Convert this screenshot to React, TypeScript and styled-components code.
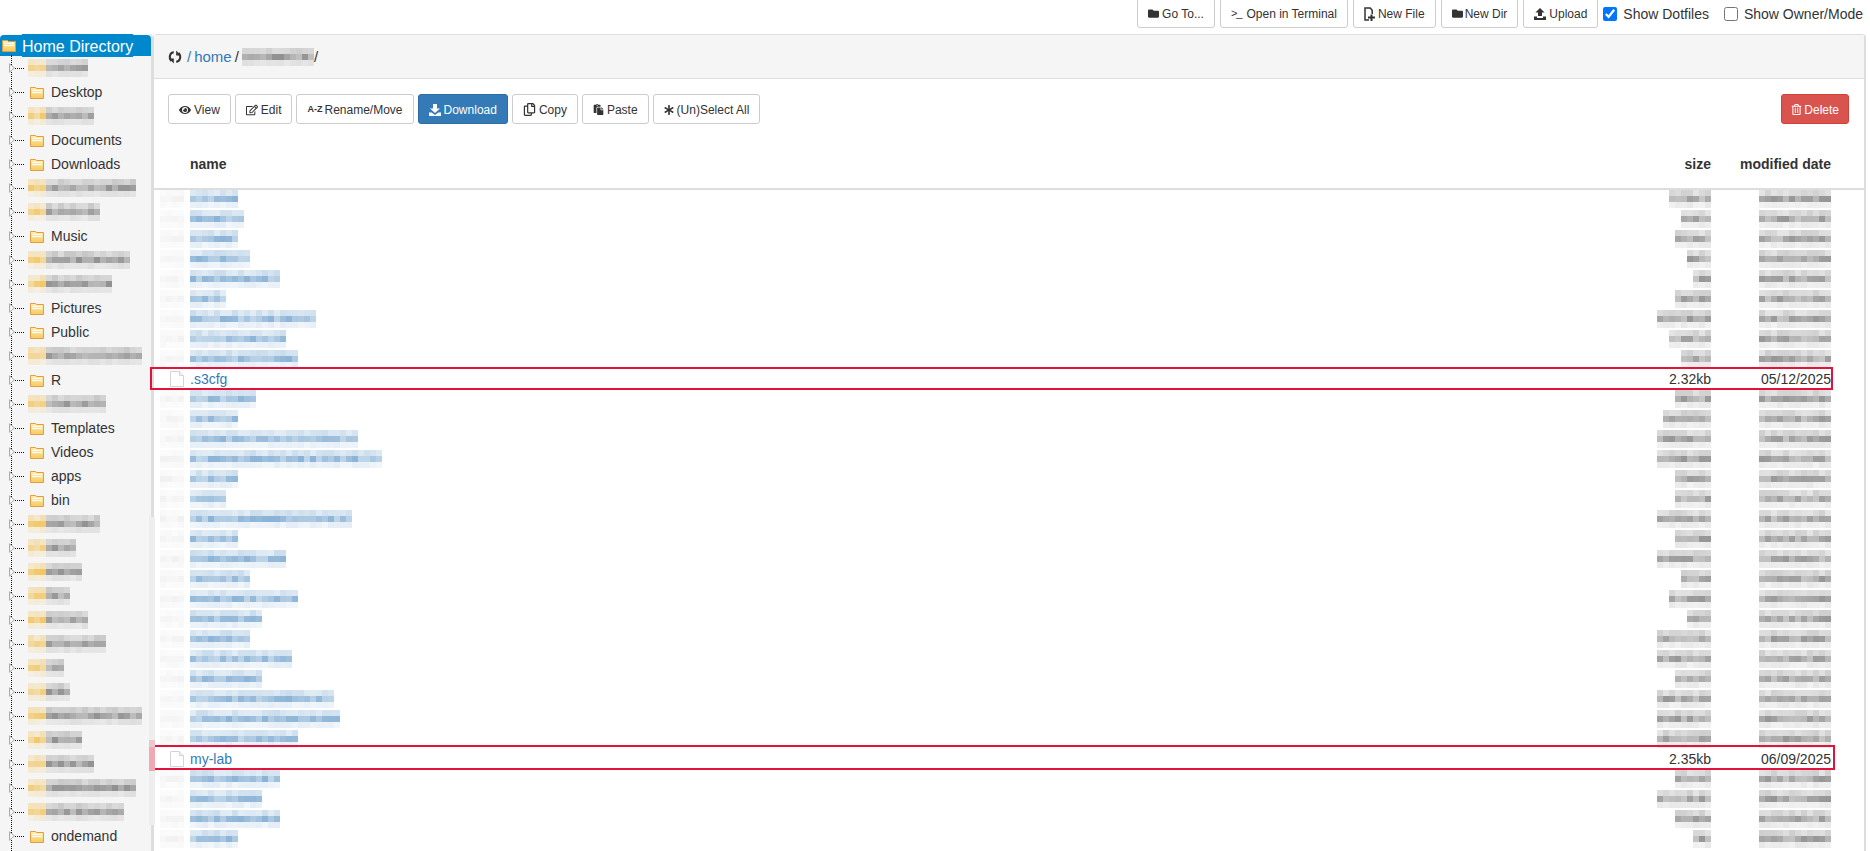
import React from 'react'
import styled, { createGlobalStyle } from 'styled-components'
import { FaEye, FaRegEdit, FaFolder, FaRegCopy, FaPaste, FaAsterisk, FaRegTrashAlt } from 'react-icons/fa'

const GlobalStyle = createGlobalStyle`
  html, body {
    margin: 0;
    padding: 0;
    height: 851px;
    overflow: hidden;
    background: #fff;
    color: #333;
    font-family: "Liberation Sans", Arial, sans-serif;
    font-size: 14px;
  }
`

const Page = styled.div`
  width: 1870px;
  height: 851px;
  overflow: hidden;
`

const TopBar = styled.div`
  height: 28px;
  margin-bottom: 6px;
  padding-right: 7px;
  display: flex;
  justify-content: flex-end;
  align-items: flex-end;
  gap: 5px;
`

const Main = styled.div`
  display: flex;
  height: 817px;
`

const Tree = styled.div`
  position: relative;
  width: 151px;
  flex: none;
  padding-top: 1px;
  background: #f5f5f5;
  border-top-right-radius: 4px;
  border-top-left-radius: 4px;
  border-right: 2px solid #ddd;
`

const TreeLine = styled.div`
  position: absolute;
  left: 11px;
  top: 21px;
  bottom: 0;
  border-left: 1px dotted #111;
`

const Scrollbar = styled.div`
  position: absolute;
  left: 149px;
  top: 483px;
  width: 6px;
  height: 308px;
  background: #eee;
  z-index: 2;
`

const ScrollThumb = styled.div`
  position: absolute;
  top: 223px;
  left: 0;
  width: 100%;
  height: 31px;
  background: #eea9b5;
  border-top: 7px solid #eec5cd;
  box-sizing: border-box;
`

const RootRow = styled.div`
  height: 21px;
  display: flex;
  align-items: center;
  padding-left: 2px;
  gap: 6px;
  background: #0088cc;
  border-radius: 4px 4px 0 0;
`

const RootLabel = styled.span`
  color: #fff;
  font-size: 16px;
  line-height: 21px;
  background: #0088cc;
  height: 21px;
  padding-top: 2px;
`

const TreeRow = styled.div`
  height: 24px;
  display: flex;
  align-items: center;
  padding-left: 9px;
  position: relative;
`

const Connector = styled.span`
  width: 9px;
  border-top: 1px dotted #111;
`

const NodeLabel = styled.span`
  margin-left: 7px;
  font-size: 14px;
  color: #333;
  white-space: nowrap;
`

const FolderSlot = styled.span`
  margin-left: 6px;
  display: flex;
`

const BlurSlot = styled.span`
  margin-left: 4px;
  display: flex;
`

const Panel = styled.section`
  width: 1713px;
  flex: none;
  border: 1px solid #ddd;
  border-width: 1px 2px 0 1px;
  border-radius: 4px 4px 0 0;
  box-sizing: border-box;
`

const PathBar = styled.div`
  height: 44px;
  box-sizing: border-box;
  background: #f5f5f5;
  border-bottom: 1px solid #ddd;
  display: flex;
  align-items: center;
  padding-left: 14px;
  font-size: 15px;
`

const PathLink = styled.a`
  color: #337ab7;
  text-decoration: none;
`

const Slash = styled.span<{ $flush?: boolean }>`
  color: #333;
  margin: 0 3px 0 ${(p) => (p.$flush ? 0 : 3)}px;
`

const LeadSlash = styled(Slash)`
  margin-left: 5px;
`

const ActionBar = styled.div`
  display: flex;
  align-items: center;
  gap: 4px;
  padding: 15px 15px 0 14px;
`

const Button = styled.button<{ $tone?: 'primary' | 'danger' }>`
  height: 30px;
  flex: none;
  box-sizing: border-box;
  display: inline-flex;
  align-items: center;
  gap: 3px;
  padding: 1px 10px 0;
  border-radius: 3px;
  border: 1px solid
    ${(p) => (p.$tone === 'primary' ? '#2e6da4' : p.$tone === 'danger' ? '#d43f3a' : '#ccc')};
  background: ${(p) => (p.$tone === 'primary' ? '#337ab7' : p.$tone === 'danger' ? '#d9534f' : '#fff')};
  color: ${(p) => (p.$tone ? '#fff' : '#333')};
  font-family: inherit;
  font-size: 12px;
  line-height: 1;
  white-space: nowrap;
  svg {
    flex: none;
  }
`

const DangerButton = styled(Button)`
  gap: 2px;
  padding: 1px 9px 0;
`

const Push = styled.div`
  flex: 1;
`

const AZ = styled.span`
  font-size: 9px;
  font-weight: bold;
  margin-right: -1px;
`

const Prompt = styled.span`
  font-size: 11px;
  letter-spacing: -1px;
  margin-right: 2px;
`

const TightFolder = styled(FaFolder)`
  margin-right: -1px;
`

const CheckLabel = styled.label`
  display: inline-flex;
  align-items: center;
  gap: 6px;
  height: 28px;
  font-size: 14px;
  color: #333;
  white-space: nowrap;
  input {
    width: 14px;
    height: 14px;
    margin: 0;
  }
`

const OwnerCheck = styled(CheckLabel)`
  margin-left: 10px;
`

const HeaderRow = styled.div`
  height: 66px;
  box-sizing: border-box;
  padding: 16px 33px 0 36px;
  display: grid;
  grid-template-columns: 1fr 100px 120px;
  align-items: center;
  border-bottom: 2px solid #ddd;
  font-weight: bold;
  font-size: 14px;
`

const RowList = styled.div`
  margin-top: -1px;
`

const RightCell = styled.div`
  display: flex;
  justify-content: flex-end;
  align-items: center;
  white-space: nowrap;
  color: #333;
`

const FileRow = styled.div`
  position: relative;
  height: 20px;
  padding-right: 33px;
  display: grid;
  grid-template-columns: 36px 1fr 100px 120px;
  align-items: center;
  font-size: 14px;
`

const IconCell = styled.div`
  display: flex;
  justify-content: flex-end;
  padding-right: 6px;
`

const NameLink = styled.a`
  color: #337ab7;
  text-decoration: none;
  display: flex;
`

const MarkBox = styled.div<{ $top: number; $height: number; $right: number }>`
  position: absolute;
  left: -4px;
  top: ${(p) => p.$top}px;
  height: ${(p) => p.$height}px;
  right: ${(p) => p.$right}px;
  border: 2px solid #e3123a;
  box-sizing: border-box;
  pointer-events: none;
`

const tones = {
  blue: [51, 122, 183],
  gray: [70, 70, 70],
  faint: [150, 150, 150],
} as const

// redaction mosaic: 6px cells, three rows, the middle one darkest
const Mosaic = ({
  width,
  seed,
  tone,
  lead = 0,
}: {
  width: number
  seed: number
  tone: keyof typeof tones
  lead?: number
}) => {
  let s = seed * 7919 + 13
  const rnd = () => {
    s = (s * 16807) % 2147483647
    return (s % 1000) / 1000
  }
  const cols = Math.round(width / 6)
  const base = tone === 'faint' ? [0.05, 0.1, 0.05] : [0.2, 0.44, 0.1]
  const cells = []
  for (let r = 0; r < 3; r++) {
    for (let c = 0; c < cols; c++) {
      const isLead = c < lead
      const [cr, cg, cb] = isLead ? [240, 185, 60] : tones[tone]
      const a = base[r] * (0.7 + rnd() * 0.6) * (isLead ? 1.4 : 1)
      cells.push(
        <rect key={`${r}-${c}`} x={c * 6} y={r * 6} width={6} height={6} fill={`rgba(${cr},${cg},${cb},${a.toFixed(3)})`} />,
      )
    }
  }
  return (
    <svg width={cols * 6} height={18} style={{ display: 'block' }}>
      {cells}
    </svg>
  )
}

const TreeFolder = () => (
  <svg width="14" height="13" viewBox="0 0 14 13">
    <defs>
      <linearGradient id="fold" x1="0" y1="0" x2="0" y2="1">
        <stop offset="0" stopColor="#fff0b8" />
        <stop offset="1" stopColor="#f7c95a" />
      </linearGradient>
    </defs>
    <path d="M.5 2.5v-1h5l1 1h7v10H.5z" fill="url(#fold)" stroke="#e39b45" />
    <path d="M2 4.5h10M2 6.5h10" stroke="#fff" strokeWidth="1" />
  </svg>
)

const Arrow = () => (
  <svg width="6" height="10" viewBox="0 0 6 10" style={{ flex: 'none' }}>
    <path d="M.5.7v8.6L5.3 5z" fill="#f5f5f5" stroke="#aaa" />
  </svg>
)

const FileIcon = () => (
  <svg width="14" height="16" viewBox="0 0 14 16" style={{ display: 'block' }}>
    <path d="M.5.5h9l4 4v11H.5z" fill="#fff" stroke="#d4d4d4" />
    <path d="M9.5.5v4h4" fill="#f2f2f2" stroke="#d4d4d4" />
  </svg>
)

const RefreshIcon = () => (
  <svg width="14" height="14" viewBox="0 0 14 14">
    <path d="M5.8 2.2C1.8 2.4.4 7.8 3.4 11" fill="none" stroke="#333" strokeWidth="2" />
    <path d="M1.2 8.6h4.6v4.8z" fill="#333" />
    <path d="M8.2 11.8c4-.2 5.4-5.6 2.4-8.8" fill="none" stroke="#333" strokeWidth="2" />
    <path d="M12.8 5.4H8.2V.6z" fill="#333" />
  </svg>
)

const SaveIcon = () => (
  <svg width="12" height="12" viewBox="0 0 12 12">
    <path d="M4 0h4v4.5h3L6 9 1 4.5h3zM0 8.5h2.6L6 11l3.4-2.5H12V12H0z" fill="currentColor" />
  </svg>
)

const OpenIcon = () => (
  <svg width="12" height="12" viewBox="0 0 12 12">
    <path d="M6 0l4.6 4.5H8V8H4V4.5H1.4zM0 8.5h3V10h6V8.5h3V12H0z" fill="currentColor" />
  </svg>
)

const NewFileIcon = () => (
  <svg width="11" height="14" viewBox="0 0 11 14">
    <path d="M5 13H1V1h5.2l2 2.3V7" fill="none" stroke="currentColor" strokeWidth="1.5" />
    <path d="M6.5 7.5h2v2H11v2H8.5V14h-2v-2.5H4v-2h2.5z" fill="currentColor" />
  </svg>
)

const folderNodes: (string | { w: number })[] = [
  { w: 66 }, 'Desktop', { w: 72 }, 'Documents', 'Downloads', { w: 114 }, { w: 78 }, 'Music',
  { w: 108 }, { w: 90 }, 'Pictures', 'Public', { w: 120 }, 'R', { w: 84 }, 'Templates', 'Videos',
  'apps', 'bin', { w: 78 }, { w: 54 }, { w: 60 }, { w: 48 }, { w: 66 }, { w: 84 }, { w: 42 },
  { w: 48 }, { w: 120 }, { w: 60 }, { w: 72 }, { w: 114 }, { w: 102 }, 'ondemand', { w: 60 },
]

type FileEntry = {
  name?: string
  size?: string
  date?: string
  nameW?: number
  sizeW?: number
  mark?: { top: number; height: number; right: number }
}

const files: FileEntry[] = [
  { nameW: 48, sizeW: 42 }, { nameW: 54, sizeW: 30 }, { nameW: 48, sizeW: 36 }, { nameW: 60, sizeW: 24 },
  { nameW: 90, sizeW: 18 }, { nameW: 36, sizeW: 36 }, { nameW: 126, sizeW: 54 }, { nameW: 96, sizeW: 42 },
  { nameW: 108, sizeW: 30 },
  { name: '.s3cfg', size: '2.32kb', date: '05/12/2025', mark: { top: -2, height: 23, right: 31 } },
  { nameW: 66, sizeW: 36 }, { nameW: 48, sizeW: 48 }, { nameW: 168, sizeW: 54 }, { nameW: 192, sizeW: 54 },
  { nameW: 48, sizeW: 36 }, { nameW: 36, sizeW: 36 }, { nameW: 160, sizeW: 54 }, { nameW: 48, sizeW: 36 },
  { nameW: 96, sizeW: 54 }, { nameW: 58, sizeW: 30 }, { nameW: 106, sizeW: 42 }, { nameW: 70, sizeW: 24 },
  { nameW: 58, sizeW: 54 }, { nameW: 102, sizeW: 54 }, { nameW: 70, sizeW: 36 }, { nameW: 142, sizeW: 54 },
  { nameW: 148, sizeW: 54 }, { nameW: 108, sizeW: 54 },
  { name: 'my-lab', size: '2.35kb', date: '06/09/2025', mark: { top: -4, height: 25, right: 29 } },
  { nameW: 92, sizeW: 36 }, { nameW: 72, sizeW: 54 }, { nameW: 92, sizeW: 36 }, { nameW: 46, sizeW: 18 },
  {},
]

const App = () => (
  <Page>
    <GlobalStyle />
    <TopBar>
      <Button><FaFolder size={11} />Go To...</Button>
      <Button><Prompt>{'>_'}</Prompt>Open in Terminal</Button>
      <Button><NewFileIcon />New File</Button>
      <Button><TightFolder size={11} />New Dir</Button>
      <Button><OpenIcon />Upload</Button>
      <CheckLabel><input type="checkbox" defaultChecked />Show Dotfiles</CheckLabel>
      <OwnerCheck><input type="checkbox" />Show Owner/Mode</OwnerCheck>
    </TopBar>
    <Main>
      <Tree>
        <TreeLine />
        <RootRow>
          <TreeFolder />
          <RootLabel>Home Directory</RootLabel>
        </RootRow>
        {folderNodes.map((node, i) => (
          <TreeRow key={i}>
            <Arrow />
            <Connector />
            {typeof node === 'string' ? (
              <>
                <FolderSlot><TreeFolder /></FolderSlot>
                <NodeLabel>{node}</NodeLabel>
              </>
            ) : (
              <BlurSlot><Mosaic width={node.w - 6} seed={i + 3} tone="gray" lead={3} /></BlurSlot>
            )}
          </TreeRow>
        ))}
        <Scrollbar><ScrollThumb /></Scrollbar>
      </Tree>
      <Panel>
        <PathBar>
          <RefreshIcon />
          <LeadSlash><PathLink href="#">/</PathLink></LeadSlash>
          <PathLink href="#">home</PathLink>
          <Slash>/</Slash>
          <Mosaic width={72} seed={99} tone="gray" />
          <Slash $flush>/</Slash>
        </PathBar>
        <ActionBar>
          <Button><FaEye size={12} />View</Button>
          <Button><FaRegEdit size={12} />Edit</Button>
          <Button><AZ>A-Z</AZ>Rename/Move</Button>
          <Button $tone="primary"><SaveIcon />Download</Button>
          <Button><FaRegCopy size={13} />Copy</Button>
          <Button><FaPaste size={11} />Paste</Button>
          <Button><FaAsterisk size={10} />(Un)Select All</Button>
          <Push />
          <DangerButton $tone="danger"><FaRegTrashAlt size={11} />Delete</DangerButton>
        </ActionBar>
        <HeaderRow>
          <div>name</div>
          <RightCell>size</RightCell>
          <RightCell>modified date</RightCell>
        </HeaderRow>
        <RowList>
          {files.map((f, i) => (
            <FileRow key={i}>
              <IconCell>
                {f.nameW ? <Mosaic width={24} seed={i + 40} tone="faint" /> : <FileIcon />}
              </IconCell>
              <NameLink href="#">
                {f.nameW ? <Mosaic width={f.nameW} seed={i + 50} tone="blue" /> : f.name}
              </NameLink>
              <RightCell>
                {f.sizeW ? <Mosaic width={f.sizeW} seed={i + 150} tone="gray" /> : f.size}
              </RightCell>
              <RightCell>
                {f.sizeW ? <Mosaic width={72} seed={i + 250} tone="gray" /> : f.date}
              </RightCell>
              {f.mark && <MarkBox $top={f.mark.top} $height={f.mark.height} $right={f.mark.right} />}
            </FileRow>
          ))}
        </RowList>
      </Panel>
    </Main>
  </Page>
)

export default App
